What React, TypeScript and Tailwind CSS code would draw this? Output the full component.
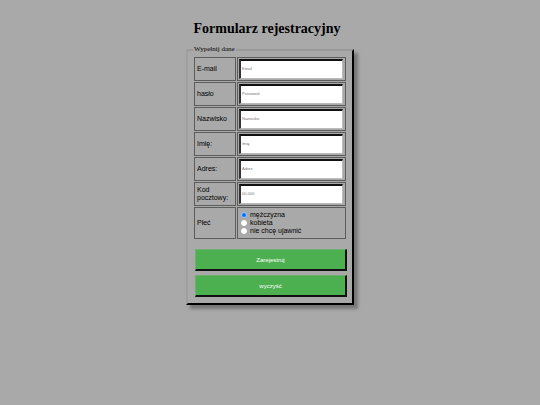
import React from "react";

type FieldProps = {
  id: string;
  label: string;
  type?: string;
  placeholder: string;
};

const fields: FieldProps[] = [
  { id: "email", label: "E-mail", type: "email", placeholder: "Email" },
  { id: "haslo", label: "hasło", type: "password", placeholder: "Password" },
  { id: "nazwisko", label: "Nazwisko", placeholder: "Nazwisko" },
  { id: "imie", label: "Imię:", placeholder: "Imię" },
  { id: "adres", label: "Adres:", placeholder: "Adres" },
  { id: "kod", label: "Kod pocztowy:", placeholder: "00-000" },
];

const genders = [
  { id: "mezczyzna", label: "mężczyzna" },
  { id: "kobieta", label: "kobieta" },
  { id: "nie-ujawniam", label: "nie chcę ujawnić" },
];

const FieldRow: React.FC<FieldProps> = ({ id, label, type, placeholder }) => {
  return (
    <tr>
      <th
        scope="row"
        className="w-[42px] border border-[#5c5c5c] px-0.5 py-0 text-left align-middle font-normal"
      >
        <label htmlFor={id}>{label}</label>
      </th>
      <td className="border border-[#5c5c5c] p-px pr-0.5">
        <input
          id={id}
          name={id}
          type={type || "text"}
          placeholder={placeholder}
          className="block h-5 w-full border-t-2 border-l-2 border-r border-b border-t-[#111] border-l-[#333] border-r-[#bbb] border-b-[#bbb] bg-white px-px pb-0.5 text-[4px] placeholder:text-[#757575] outline-none"
        />
      </td>
    </tr>
  );
};

const buttonClass =
  "block h-[22px] w-full cursor-pointer border-t border-l border-r-2 border-b-2 border-t-[#6faf72] border-l-[#6faf72] border-r-[#111] border-b-[#111] bg-[#4caf50] text-center text-[6px] leading-[8px] text-white";

export default function App() {
  return (
    <div className="min-h-screen bg-[#a9a9a9] pt-[21px] font-['Liberation_Sans',Arial,sans-serif] text-[7px] leading-[8px] text-black">
      <h1 className="pr-1.5 text-center font-['Liberation_Serif','Times_New_Roman',serif] text-[14px] leading-[16px] font-bold">
        Formularz rejestracyjny
      </h1>
      <form className="mx-auto mt-2 w-[168px]">
        <fieldset className="border-2 border-t-[#999] border-l-[#9f9f9f] border-r-black border-b-black px-[5px] pb-1.5 shadow-[4px_4px_3px_#777]">
          <legend className="px-px font-['Liberation_Serif','Times_New_Roman',serif] text-[7px] leading-[9px]">
            Wypełnij dane
          </legend>
          <table className="mt-0.5 w-full table-fixed border-separate border-spacing-px">
            <tbody>
              {fields.map((field) => (
                <FieldRow key={field.id} {...field} />
              ))}
              <tr>
                <th
                  scope="row"
                  className="border border-[#5c5c5c] px-0.5 text-left align-middle font-normal"
                >
                  Płeć
                </th>
                <td className="border border-[#5c5c5c] p-[3px]">
                  {genders.map((gender) => (
                    <label key={gender.id} className="flex h-2 items-center gap-[3px]">
                      <input
                        type="radio"
                        name="plec"
                        value={gender.id}
                        defaultChecked={gender.id === "mezczyzna"}
                        className="size-1.5 appearance-none rounded-full border border-white bg-white checked:border-[#a5c8f0] checked:bg-[#0075ff]"
                      />
                      {gender.label}
                    </label>
                  ))}
                </td>
              </tr>
            </tbody>
          </table>
          <div className="mt-[9px] flex flex-col gap-1 pl-0.5">
            <button type="submit" className={buttonClass}>
              Zarejestruj
            </button>
            <button type="reset" className={buttonClass}>
              wyczyść
            </button>
          </div>
        </fieldset>
      </form>
    </div>
  );
}
